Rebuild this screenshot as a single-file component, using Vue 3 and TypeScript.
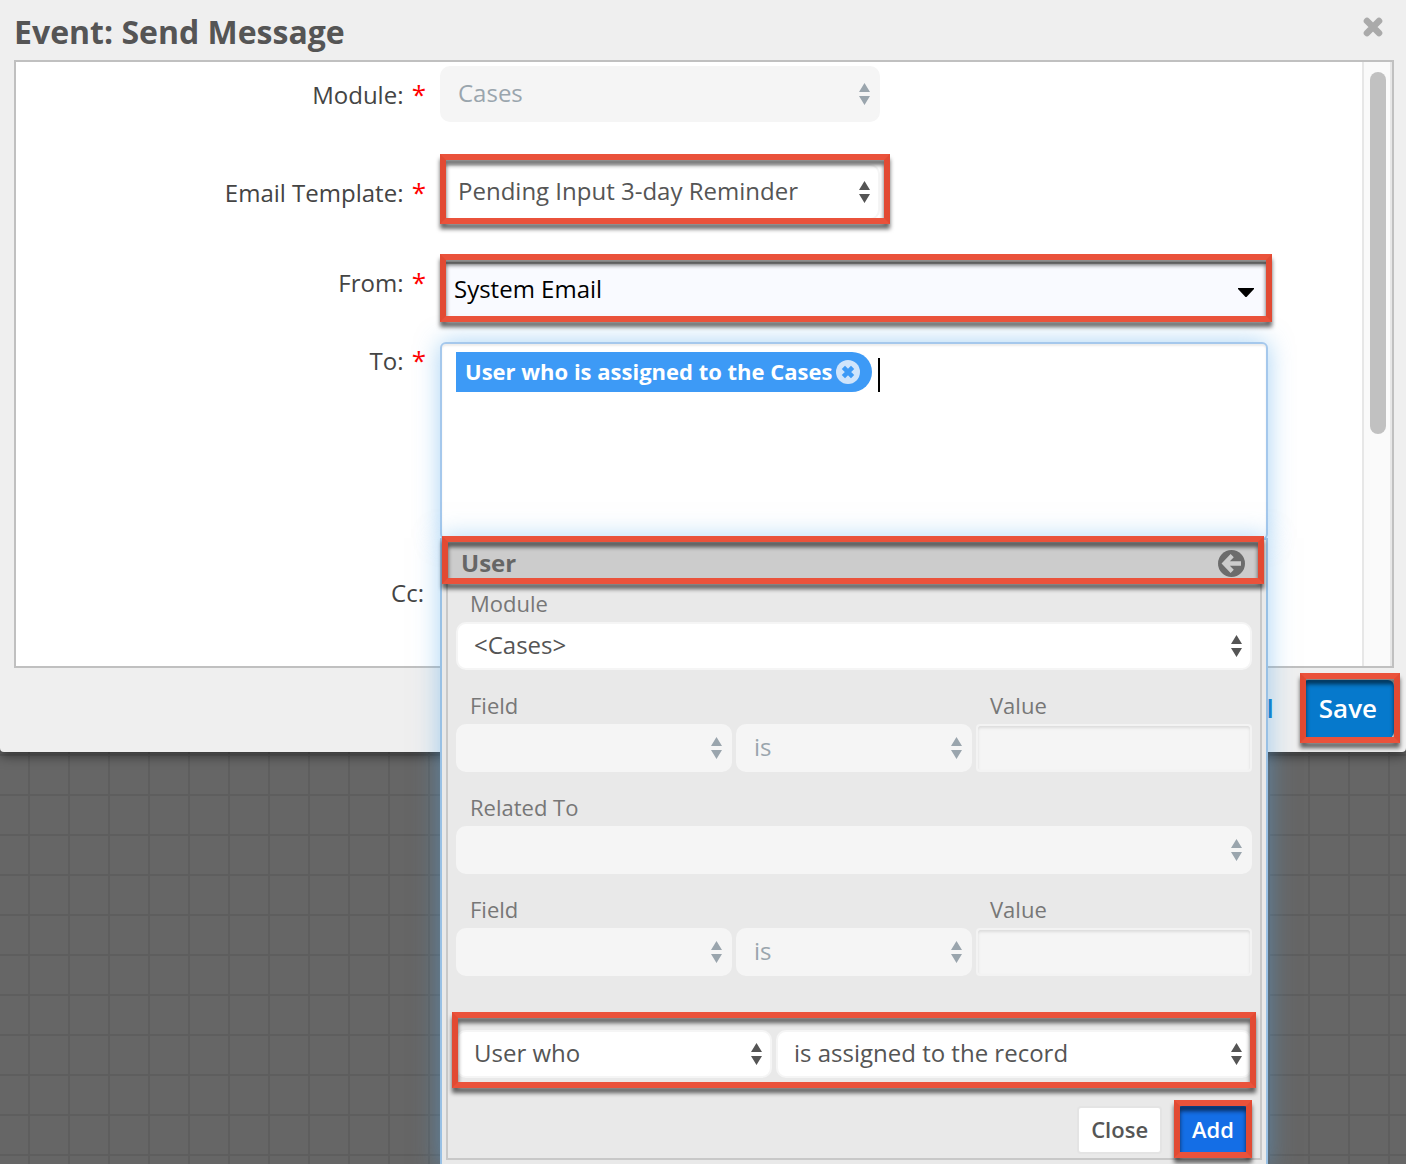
<script setup lang="ts">
import { ref } from 'vue'

interface FilterRow {
  id: string
  label: string
}

const filterRows: FilterRow[] = [
  { id: 'module', label: 'Field' },
  { id: 'related', label: 'Field' },
]

const template = ref('Pending Input 3-day Reminder')
const sender = ref('System Email')
const recipients = ref<string[]>(['User who is assigned to the Cases'])
const draft = ref('')

function removeRecipient(index: number): void {
  recipients.value.splice(index, 1)
}
</script>

<template>
  <div class="page">
    <section class="dialog" role="dialog" aria-labelledby="dialog-title">
      <header class="dialog-head">
        <h1 id="dialog-title">Event: Send Message</h1>
        <button class="icon-button" type="button" aria-label="Close dialog">
          <svg width="20" height="20" viewBox="0 0 20 20">
            <path d="M4 4L16 16M16 4L4 16" stroke="#aaa" stroke-width="6.6" stroke-linecap="round" />
          </svg>
        </button>
      </header>

      <div class="dialog-body">
        <form class="form" @submit.prevent>
          <div class="row spaced">
            <label class="label low" for="module">Module: <span class="required">*</span></label>
            <div class="select medium">
              <select id="module" disabled><option>Cases</option></select>
              <svg class="arrows" viewBox="0 0 11 22"><path d="M5.500 0L11 9H0zM0 13H11L5.500 22z" /></svg>
            </div>
          </div>

          <div class="row spaced">
            <label class="label low" for="template">Email Template: <span class="required">*</span></label>
            <div class="select medium marked mark-template">
              <select id="template" v-model="template"><option>Pending Input 3-day Reminder</option></select>
              <svg class="arrows" viewBox="0 0 11 22"><path d="M5.500 0L11 9H0zM0 13H11L5.500 22z" /></svg>
            </div>
          </div>

          <div class="row close-row">
            <label class="label" for="from">From: <span class="required">*</span></label>
            <div class="select sender marked mark-sender">
              <select id="from" v-model="sender"><option>System Email</option></select>
              <svg class="caret-down" viewBox="0 0 16 9"><path d="M0 0H16V1L9 8.500Q8 9.500 7 8.500L0 1z" /></svg>
            </div>
          </div>

          <div class="row to-row">
            <label class="label high" for="to">To: <span class="required">*</span></label>
            <div class="recipients">
              <div class="tokens">
                <span v-for="(name, index) in recipients" :key="name" class="token">
                  <span class="token-text">{{ name }}</span>
                  <button type="button" class="icon-button" :aria-label="`Remove ${name}`" @click="removeRecipient(index)">
                    <svg width="24" height="24" viewBox="0 0 24 24">
                      <circle cx="12" cy="12" r="12" fill="#cfe4fb" />
                      <path d="M7.400 7.400L16.600 16.600M16.600 7.400L7.400 16.600" stroke="#3d9af6" stroke-width="4.600" />
                    </svg>
                  </button>
                </span>
                <span class="text-cursor" aria-hidden="true"></span>
                <input id="to" v-model="draft" type="text" autocomplete="off" />
              </div>

              <div class="picker">
                <div class="picker-frame">
                  <div class="picker-head marked mark-head">
                    <h2>User</h2>
                    <button type="button" class="icon-button" aria-label="Back">
                      <svg width="27" height="27" viewBox="0 0 27 27">
                        <circle cx="13.500" cy="13.500" r="13.500" fill="#6c6c6c" />
                        <path d="M14.200 5.600L6.600 13.500L14.200 21.400M8 13.500H23" fill="none" stroke="#ccc" stroke-width="4.400" />
                      </svg>
                    </button>
                  </div>

                  <div class="picker-body">
                    <label class="small-label" for="picker-module">Module</label>
                    <div class="select compact">
                      <select id="picker-module"><option>&lt;Cases&gt;</option></select>
                      <svg class="arrows" viewBox="0 0 11 22"><path d="M5.500 0L11 9H0zM0 13H11L5.500 22z" /></svg>
                    </div>

                    <template v-for="row in filterRows" :key="row.id">
                      <template v-if="row.id === 'related'">
                        <label class="small-label next" for="picker-related">Related To</label>
                        <div class="select compact">
                          <select id="picker-related" disabled><option></option></select>
                          <svg class="arrows" viewBox="0 0 11 22"><path d="M5.500 0L11 9H0zM0 13H11L5.500 22z" /></svg>
                        </div>
                      </template>

                      <div class="columns next">
                        <div class="wide">
                          <label class="small-label" :for="`${row.id}-field`">{{ row.label }}</label>
                          <div class="select compact">
                            <select :id="`${row.id}-field`" disabled><option></option></select>
                            <svg class="arrows" viewBox="0 0 11 22"><path d="M5.500 0L11 9H0zM0 13H11L5.500 22z" /></svg>
                          </div>
                        </div>
                        <div class="narrow">
                          <div class="select compact">
                            <select aria-label="Operator" disabled><option>is</option></select>
                            <svg class="arrows" viewBox="0 0 11 22"><path d="M5.500 0L11 9H0zM0 13H11L5.500 22z" /></svg>
                          </div>
                        </div>
                        <div class="wide">
                          <label class="small-label" :for="`${row.id}-value`">Value</label>
                          <input :id="`${row.id}-value`" class="value" type="text" disabled />
                        </div>
                      </div>
                    </template>

                    <div class="columns rule marked mark-rule">
                      <div class="select compact subject">
                        <select aria-label="Recipient"><option>User who</option></select>
                        <svg class="arrows" viewBox="0 0 11 22"><path d="M5.500 0L11 9H0zM0 13H11L5.500 22z" /></svg>
                      </div>
                      <div class="select compact relation">
                        <select aria-label="Relation"><option>is assigned to the record</option></select>
                        <svg class="arrows" viewBox="0 0 11 22"><path d="M5.500 0L11 9H0zM0 13H11L5.500 22z" /></svg>
                      </div>
                    </div>

                    <div class="picker-actions">
                      <button type="button" class="button">Close</button>
                      <span class="marked mark-add"><button type="button" class="button add">Add</button></span>
                    </div>
                  </div>
                </div>
              </div>
            </div>
          </div>

          <div class="row cc-row">
            <span class="label">Cc:</span>
          </div>
        </form>
        <div class="scrollbar" aria-hidden="true"><div class="thumb"></div></div>
      </div>

      <footer class="dialog-foot">
        <a href="#cancel">Cancel</a>
        <span class="marked mark-save"><button type="button" class="save">Save</button></span>
      </footer>
    </section>
  </div>
</template>

<style>
body {
  margin: 0;
}
</style>

<style scoped>
.page,
.page * {
  box-sizing: border-box;
}

.page {
  min-height: 100vh;
  overflow: hidden;
  background-color: #666;
  background-image:
    linear-gradient(to right, #5e5e5e 2px, transparent 2px),
    linear-gradient(to bottom, #5e5e5e 2px, transparent 2px);
  background-size: 40px 40px;
  background-position: 28px 34px;
  color: #444;
  font-family: "Open Sans", "Noto Sans", sans-serif;
  font-size: 24px;
  line-height: 32px;
}

button,
input,
select {
  margin: 0;
  font: inherit;
}

.icon-button {
  display: flex;
  padding: 0;
  border: 0;
  background: none;
}

.dialog {
  background: #efefef;
  border-radius: 0 0 4px 4px;
  box-shadow: 0 4px 12px rgba(0, 0, 0, 0.5);
}

.dialog-head {
  display: flex;
  justify-content: space-between;
  height: 60px;
  padding: 12px 23px 0 14px;
}

h1 {
  margin: 0;
  color: #555;
  font-size: 32px;
  line-height: 40px;
}

.dialog-head .icon-button {
  height: 20px;
  margin-top: 5px;
}

.dialog-body {
  display: flex;
  margin: 0 12px 0 14px;
  border: 2px solid #c0c0c0;
  background: #fff;
}

.form {
  flex: 1;
  min-width: 0;
  padding-top: 4px;
}

.scrollbar {
  width: 30px;
  padding: 10px 4px 0 6px;
  border: solid #e7e7e7;
  border-width: 0 2px;
  background: #fafafa;
}

.thumb {
  width: 16px;
  height: 61%;
  border-radius: 8px;
  background: #c1c1c1;
}

.row {
  display: flex;
  gap: 14px;
  padding-right: 94px;
}

.spaced {
  margin-bottom: 42px;
}

.close-row {
  margin-bottom: 24px;
}

.to-row {
  margin-bottom: 33px;
}

.cc-row {
  height: 93px;
}

.label {
  flex: 0 0 410px;
  padding: 4px 2px 0 0;
  text-align: right;
  white-space: pre;
}

.low {
  padding-top: 12px;
}

.high {
  padding-top: 2px;
}

.required {
  margin: 0 -2px 0 2px;
  color: #f00;
  font-size: 26px;
}

.select {
  position: relative;
  display: flex;
  flex: 1;
  min-width: 0;
  height: 56px;
}

.select select {
  width: 100%;
  height: 100%;
  padding: 0 32px 2px 16px;
  border: 2px solid #f5f5f5;
  border-radius: 10px;
  appearance: none;
  background: #fff;
  color: #555;
  opacity: 1;
}

.select select:disabled {
  background: #f5f5f5;
  color: #9aa5ad;
}

.medium {
  flex: 0 1 440px;
}

.compact {
  height: 48px;
}

.arrows {
  position: absolute;
  top: 50%;
  right: 10px;
  width: 11px;
  height: 22px;
  margin-top: -11px;
  fill: #555;
  pointer-events: none;
}

select:disabled + .arrows {
  fill: #9aa5ad;
}

.select.sender select {
  padding-left: 12px;
  border-color: #bbb;
  border-radius: 0;
  background: #f9faff;
  color: #000;
}

.caret-down {
  position: absolute;
  top: 26px;
  right: 14px;
  width: 16px;
  height: 9px;
  pointer-events: none;
}

/* Red callout frames around the controls to fill in */
.marked {
  position: relative;
}

.marked::after {
  position: absolute;
  z-index: 2;
  border: 6px solid;
  border-color: #ea523b #e24a33;
  filter: drop-shadow(0 5px 2px rgba(0, 0, 0, 0.6));
  content: "";
  pointer-events: none;
}

.mark-template::after {
  inset: -10px -10px -4px 0;
}

.mark-sender::after {
  inset: -8px -4px -4px 0;
}

.mark-head::after {
  inset: -8px -4px 0 -6px;
}

.mark-rule::after {
  inset: -18px -4px -10px;
}

.mark-add::after {
  inset: -6px -4px -4px;
}

.mark-save::after {
  inset: -7px -6px -5px -2px;
}

.recipients {
  position: relative;
  flex: 1;
  min-width: 0;
}

.tokens {
  display: flex;
  align-items: flex-start;
  height: 198px;
  padding: 8px 14px;
  border: 2px solid #a5c8ec;
  border-radius: 6px;
  background: #fff;
  box-shadow:
    inset 0 2px 2px rgba(0, 0, 0, 0.08),
    0 0 24px rgba(82, 168, 236, 0.5);
}

.token {
  display: flex;
  flex: none;
  align-items: center;
  gap: 4px;
  height: 40px;
  padding: 0 12px 0 9px;
  border-radius: 0 20px 20px 0;
  background: #3d9af6;
  color: #fff;
  font-size: 22px;
  font-weight: 700;
}

.token-text {
  padding-bottom: 2px;
}

.text-cursor {
  width: 2px;
  height: 34px;
  margin: 6px 0 0 6px;
  background: #000;
}

.tokens input {
  flex: 1;
  min-width: 0;
  height: 40px;
  padding: 0;
  border: 0;
  outline: 0;
  background: none;
}

.picker {
  position: absolute;
  z-index: 10;
  top: 196px;
  right: 0;
  left: 0;
  padding: 2px 4px 6px;
  border: 2px solid #98c0e4;
  background: #e9e9e9;
  box-shadow: 0 0 24px rgba(82, 168, 236, 0.5);
}

.picker-frame {
  border: 2px solid #c8c8c8;
}

.picker-head {
  display: flex;
  align-items: center;
  justify-content: space-between;
  height: 40px;
  padding: 0 15px 2px 13px;
  background: #ccc;
}

h2 {
  margin: 0;
  color: #666;
  font-size: 24px;
  line-height: 32px;
}

.picker-body {
  padding: 0 8px 4px;
}

.small-label {
  display: block;
  padding-left: 14px;
  color: #777;
  font-size: 22px;
  line-height: 38px;
}

.next {
  margin-top: 16px;
}

.columns {
  display: flex;
  align-items: flex-end;
  gap: 4px;
}

.wide {
  flex: 276 1 0;
  min-width: 0;
}

.narrow {
  flex: 236 1 0;
  min-width: 0;
}

.subject {
  flex: 316 1 0;
}

.relation {
  flex: 476 1 0;
}

.value {
  display: block;
  width: 100%;
  height: 48px;
  border: 2px solid #f3f3f3;
  border-radius: 4px;
  background: #f5f5f5;
  box-shadow: inset 0 2px 3px rgba(0, 0, 0, 0.1);
}

.rule {
  margin-top: 54px;
}

.picker-actions {
  display: flex;
  justify-content: flex-end;
  gap: 16px;
  margin-top: 28px;
  padding-right: 4px;
}

.button {
  display: block;
  height: 48px;
  padding: 0 12px 2px;
  border: 2px solid #e4e4e4;
  border-radius: 4px;
  background: #fff;
  color: #555;
  font-size: 22px;
  font-weight: 600;
}

.button.add {
  border-color: #146ee6;
  background: #146ee6;
  color: #fff;
}

.dialog-foot {
  display: flex;
  align-items: center;
  justify-content: flex-end;
  gap: 28px;
  padding: 12px 12px 14px;
  font-size: 26px;
  font-weight: 600;
}

.dialog-foot a {
  padding-bottom: 2px;
  color: #0679c8;
  text-decoration: none;
}

.save {
  display: block;
  height: 58px;
  padding: 0 17px 2px;
  border: 0;
  border-radius: 6px;
  background: #0679cc;
  color: #fff;
}
</style>
